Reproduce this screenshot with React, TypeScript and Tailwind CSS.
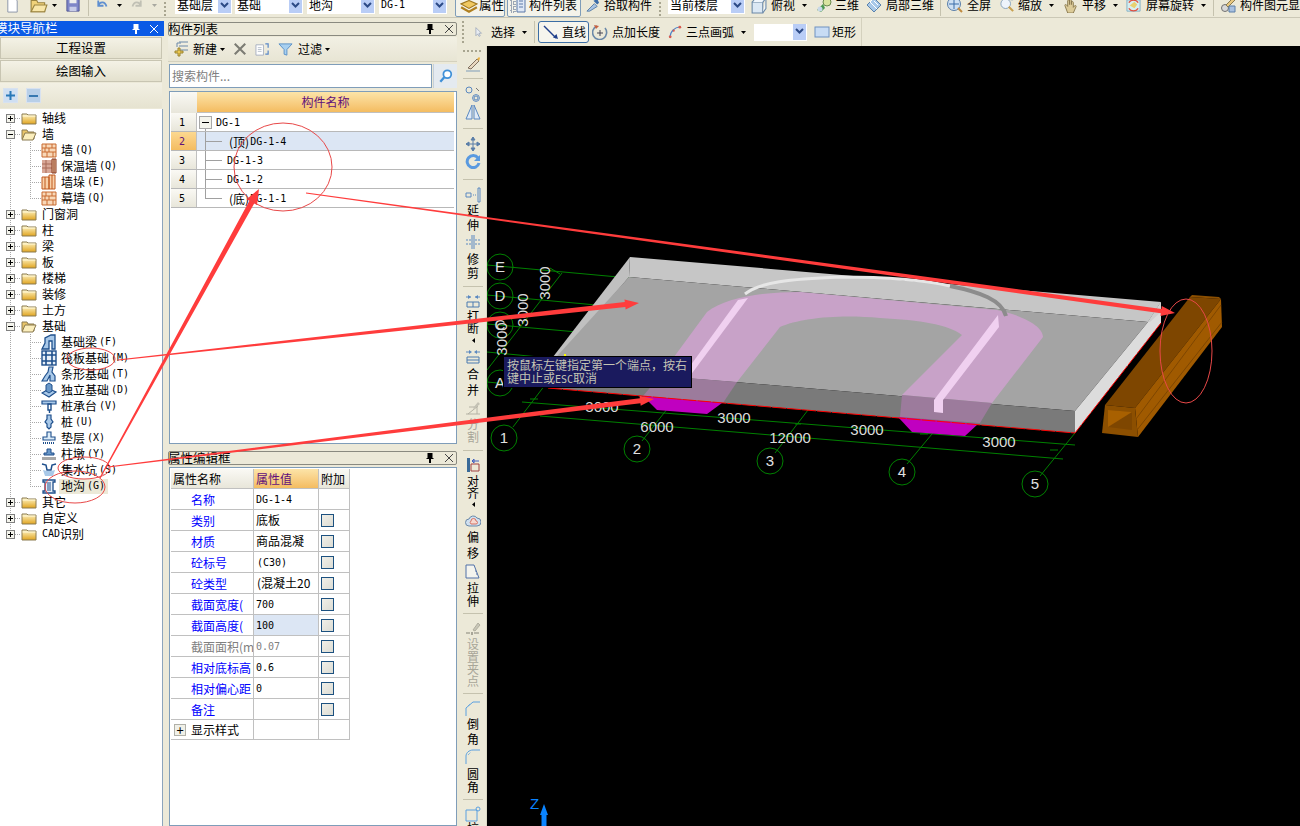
import React from "react";

const mono = "font-['DejaVu_Sans_Mono','Noto_Sans_CJK_SC',monospace] text-[10px]";

const Caret = ({ gray = false }: { gray?: boolean }) => (
  <svg width="5" height="3" viewBox="0 0 5 3" className="shrink-0"><path d="M0 0h5L2.5 3z" fill={gray ? "#a8a8a0" : "#000"} /></svg>
);
const Sep = () => <div className="w-px h-[22px] bg-[#c5c2ae] shrink-0" />;
const Grip = () => (
  <div className="w-[2px] h-[22px] shrink-0 bg-[repeating-linear-gradient(to_bottom,#a8a590_0,#a8a590_2px,transparent_2px,transparent_4px)]" />
);

const I = ({ children, s = 16, cls = "" }: { children: React.ReactNode; s?: number; cls?: string }) => (
  <svg width={s} height={s} viewBox="0 0 16 16" fill="none" className={"shrink-0 " + cls}>{children}</svg>
);

const Chevron = () => (
  <div className="w-[13px] h-[16px] bg-[#b9cdf6] flex items-center justify-center shrink-0">
    <svg width="9" height="7" viewBox="0 0 9 7"><path d="M1 1l3.5 3.5L8 1" stroke="#2c4a86" strokeWidth="2" fill="none" /></svg>
  </div>
);
const Sel = ({ w, t, m = false }: { w: string; t: string; m?: boolean }) => (
  <div className={"h-[18px] bg-white flex items-center justify-between shrink-0 pr-px " + w}>
    <span className={m ? mono + " pl-[2px] leading-none" : "pl-[2px] leading-none"}>{t}</span>
    <Chevron />
  </div>
);

/* toolbar icons */
const IDoc = () => <I s={15}><path d="M3 0h7l3 3v12H3z" fill="#fff" stroke="#8a93a8" /></I>;
const IOpen = () => <I s={18}><path d="M1 4h5l1 2h6v8H1z" fill="#f0d27a" stroke="#9a8440" /><path d="M4 8h11l-2 6H1z" fill="#f8e6a8" stroke="#9a8440" /></I>;
const ISave = () => <I s={14}><path d="M1 1h14v14H1z" fill="#7f86c8" stroke="#4a5090" /><path d="M4 1h8v5H4z" fill="#eee" /><path d="M4 10h8v5H4z" fill="#c8cce8" /></I>;
const IUndo = () => <I s={12}><path d="M3 2v7h7M3 9c2-6 9-6 11 1" stroke="#5f8fd0" strokeWidth="2.4" /></I>;
const IRedo = () => <I s={12}><path d="M13 2v7H6M13 9c-2-6-9-6-11 1" stroke="#c0c0b4" strokeWidth="2.4" /></I>;
const IProp = () => <I s={18}><path d="M1 7l7-3 7 3-7 4z" fill="#f0c860" stroke="#a07820" /><path d="M1 10l7 4 7-4" stroke="#b08020" strokeWidth="2" /></I>;
const IList = () => <I s={16}><path d="M1 2h4v3H1zM1 7h4v3H1zM1 12h4v3H1z" stroke="#455a80" strokeDasharray="1 1" /><path d="M7 1h8v14H7z" fill="#dfe8f6" stroke="#5a78a8" /><path d="M9 4h4M9 7h4M9 10h4" stroke="#5a78a8" /></I>;
const IPick = () => <I s={15}><path d="M2 14l8-8 3 3-8 5z" fill="#a8c4e4" stroke="#5a7ea8" /><path d="M9 3l4 4 2-2-2-4z" fill="#3b6ca8" /></I>;
const IView = () => <I s={17}><path d="M2 5h10v10H2z" fill="#dbe8f4" stroke="#6a88a8" /><path d="M2 5l3-4h10l-3 4M12 15l3-4V1" fill="#f0f6fc" stroke="#6a88a8" /></I>;
const I3D = () => <I><circle cx="11" cy="5" r="4" fill="#d8e4a0" stroke="#6a8a50" /><path d="M1 13l6-6 2 4-4 4z" fill="#4a9a50" /><circle cx="4" cy="12" r="2.5" fill="#c8d8e8" /></I>;
const ILocal = () => <I><path d="M1 8l7-7 7 7-7 7z" fill="#a8c8e8" stroke="#5a82ac" /><path d="M4 5l7 7M8 1l-4 4M8 4l4 4" stroke="#fff" /></I>;
const IFull = () => <I><circle cx="7" cy="7" r="6.5" fill="#cfe0f2" stroke="#5a7ea8" /><path d="M7 2v10M2 7h10" stroke="#3b6ca8" /><path d="M11 11l4 4" stroke="#c08a40" strokeWidth="2" /></I>;
const IZoom = () => <I s={14}><circle cx="6.5" cy="6.5" r="5.5" fill="#eef4fb" stroke="#7f9db9" /><path d="M10 10l5 5" stroke="#c8a050" strokeWidth="2.4" /><path d="M12 2h3" stroke="#5a7ea8" /></I>;
const IPan = () => <I s={15}><path d="M2 8c0-2 2-1 3 1V3c1-2 2-1 2 0v4-5c1-1 2 0 2 1v4-3c1-1 2 0 2 1v5c2-3 3-2 3-1l-3 7H5z" fill="#dccb98" stroke="#8a7a50" /></I>;
const IRot = () => <I s={15}><path d="M1 2h14v12H1z" fill="#d8eef0" stroke="#7fb0c8" /><path d="M4 8l5-4 3 3-3 4z" fill="#e8d070" /><path d="M3 11a6 6 0 0 0 10 0M13 5a6 6 0 0 0-10 0" stroke="#e05040" strokeWidth="1.4" /></I>;
const IShow = () => <I><circle cx="5" cy="11" r="3.5" fill="#d8d8d8" stroke="#707070" /><path d="M6 8l7-7 2 2-7 7z" fill="#e8c880" stroke="#8a7a50" /><path d="M9 9h6v6H9z" fill="#a8c0e0" stroke="#5a7ea8" /></I>;
const IPointer = () => <I s={10}><path d="M3 1v13l3-3 2 4 2-1-2-4h4z" fill="#e8ecf2" stroke="#8a98b0" /></I>;
const ILine = () => <I><path d="M1 2l12 12" stroke="#1f3f8a" strokeWidth="1.4" /><path d="M15 15l-5-1.5 3.5-3.5z" fill="#1f3f8a" /></I>;
const ICircle = () => <I><path d="M5 2a7 7 0 1 0 8 2" stroke="#6a88a8" strokeWidth="1.6" /><path d="M2 1l5 1-3 3z" fill="#c86040" /><path d="M8 6v6M5 9h6" stroke="#445" /></I>;
const IArc = () => <I s={14}><path d="M2 14C3 7 7 3 14 2" stroke="#4a82c8" strokeWidth="1.4" /><circle cx="2.5" cy="13.5" r="1.6" fill="#d85a50" /><circle cx="13.5" cy="2.5" r="1.6" fill="#d85a50" /><circle cx="6.5" cy="6.5" r="1.3" fill="#d85a50" /></I>;
const IRect = () => <I><rect x="1" y="3" width="14" height="10" fill="#c8dcf4" stroke="#6f92c0" /></I>;
const INew = () => <I><path d="M6 1h9M6 5h9M6 9h9" stroke="#6a88a8" /><path d="M8 2H4v4" stroke="#6a88a8" /><path d="M2 10h3V7h2v3h3v2H7v3H5v-3H2z" fill="#ecc850" stroke="#9a8430" /></I>;
const IX = () => <I s={14}><path d="M2 2l12 12M14 2L2 14" stroke="#7c7c74" strokeWidth="2.4" /></I>;
const ICopy = () => <I s={15}><path d="M1 3h8v11H1z" fill="#fff" stroke="#a8b0c0" /><path d="M3 6h4M3 8h4M3 10h4" stroke="#b8c0cc" /><path d="M11 2h3v4M14 9v4h-3" stroke="#5a88c8" strokeWidth="1.3" /></I>;
const IFilter = () => <I s={15}><path d="M1 2h14L9.5 8v6l-3-1V8z" fill="#a8d0f0" stroke="#5a90c8" /></I>;
const ISearch = () => <I s={14}><circle cx="9.5" cy="6" r="4.5" fill="#fff" stroke="#3f90d8" strokeWidth="2" /><path d="M6 9.5l-4.5 5" stroke="#3f90d8" strokeWidth="2.6" /></I>;

/* vertical toolbar */
const G = "#5a88c0";
const VI: Record<string, React.ReactNode> = {
  brush: <I><path d="M1 15h14" stroke="#7f9db9" /><path d="M3 12l9-9 2 2-8 8z" fill="#e8d8c0" stroke="#807060" /><path d="M12 3l2-2 1 1-1 3z" fill="#e8b040" /></I>,
  scale: <I><circle cx="4" cy="4" r="3" stroke={G} /><circle cx="11" cy="12" r="3.4" stroke={G} /><circle cx="11" cy="12" r="2" stroke={G} /><path d="M11 2l3 3" stroke="#777" /></I>,
  mirror: <I><path d="M7 1L1 15h6zM9 1l6 14H9z" fill="#dfeaf6" stroke={G} /></I>,
  move: <I><path d="M8 1v14M1 8h14M8 1L6 4h4zM8 15l-2-3h4zM1 8l3-2v4zM15 8l-3-2v4z" stroke="#5a7ea8" fill="#5a7ea8" /></I>,
  rot: <I><path d="M13 4a6 6 0 1 0 1 5" stroke="#5a9ae0" strokeWidth="3" /><path d="M15 1v6H9z" fill="#5a9ae0" /></I>,
  ext: <I><path d="M1 6h5v4H1z" stroke={G} /><path d="M8 8h4" stroke={G} strokeDasharray="1 1" /><path d="M13 1h2v14h-2z" stroke={G} /></I>,
  trim: <I><path d="M1 6h6M1 10h6M10 6h5M10 10h5" stroke={G} strokeDasharray="2 1" /><path d="M7 1v14M9 1v14" stroke={G} /></I>,
  brk: <I><path d="M1 4h5M10 4h5" stroke={G} /><path d="M6 4L3 2v4zM10 4l3-2v4z" fill={G} /><path d="M2 9h12v5H2zM8 9v5" stroke="#4a7ab0" /></I>,
  mrg: <I><path d="M1 3h4M11 3h4" stroke={G} /><path d="M7 3L4 1v4zM9 3l3-2v4z" fill={G} /><path d="M2 8h12v6H2zM2 11h12" stroke="#4a7ab0" /></I>,
  split: <I><path d="M1 14h14M3 14L13 6M4 7h8v7" stroke="#b4b2a4" /><path d="M8 8l5-6 2 2-6 5z" fill="#c4c2b4" /></I>,
  align: <I><path d="M2 1h3v14H2z" fill="#3a6a98" /><path d="M6 7h8v7H6z" stroke="#a04040" /><path d="M7 4h7M7 4l2-2v4z" stroke="#4060c0" /></I>,
  off: <I><path d="M4 13a3.5 3.5 0 0 1 0-7 4.5 4.5 0 0 1 8-1 4 4 0 0 1 0 8z" fill="#cfe0f0" stroke="#6a88a8" /><path d="M6 11a2 2 0 0 1 0-3 2.5 2.5 0 0 1 5 0 1.5 1.5 0 0 1 0 3z" fill="#f6d8d0" stroke="#d87060" /></I>,
  str: <I><path d="M1 14V1h8l5 13z" stroke="#5070a8" fill="#f4f4ee" /><path d="M10 7h1M11 10h2" stroke="#5070a8" strokeDasharray="1 1" /></I>,
  grip: <I><path d="M1 12h4M9 12h5" stroke="#a8a698" strokeWidth="1.3" /><rect x="6" y="11" width="2" height="3" fill="#a8a698" /><path d="M8 9l5-7 2 2-5 6z" fill="#c8c6b8" stroke="#b0ae9e" /></I>,
  cham: <I><path d="M1 15V7l7-6h7" stroke="#5aa0e0" /><path d="M3 5l2-2" stroke="#5aa0e0" strokeDasharray="1 1" /></I>,
  fil: <I><path d="M1 15V7C1 4 4 1 8 1h7" stroke="#5aa0e0" /><path d="M3 6l3-3" stroke="#5aa0e0" strokeDasharray="1 1" /></I>,
  rc: <I><path d="M1 4h11v11H1z" stroke="#5aa0e0" /><circle cx="13" cy="3" r="2" stroke="#5aa0e0" /></I>,
};

type VItem = { y: number; k: "grip" | "sep" | "icon" | "ch" | "tri"; v?: string; off?: boolean };
const vRaw: VItem[] = [
  { y: 50, k: "grip" }, { y: 63, k: "icon", v: "brush" }, { y: 79, k: "sep" },
  { y: 92, k: "icon", v: "scale" }, { y: 114, k: "icon", v: "mirror" }, { y: 129, k: "sep" },
  { y: 142, k: "icon", v: "move" }, { y: 164, k: "icon", v: "rot" }, { y: 179, k: "sep" },
  { y: 194, k: "icon", v: "ext" }, { y: 211, k: "ch", v: "延" }, { y: 222, k: "ch", v: "伸" },
  { y: 243, k: "icon", v: "trim" }, { y: 261, k: "ch", v: "修" }, { y: 272, k: "ch", v: "剪" }, { y: 286, k: "sep" },
  { y: 300, k: "icon", v: "brk" }, { y: 317, k: "ch", v: "打" }, { y: 328, k: "ch", v: "断" }, { y: 338, k: "tri" },
  { y: 357, k: "icon", v: "mrg" }, { y: 375, k: "ch", v: "合" }, { y: 387, k: "ch", v: "并" },
  { y: 410, k: "icon", v: "split" }, { y: 424, k: "ch", v: "分", off: true }, { y: 437, k: "ch", v: "割", off: true }, { y: 449, k: "sep" },
  { y: 465, k: "icon", v: "align" }, { y: 482, k: "ch", v: "对" }, { y: 493, k: "ch", v: "齐" }, { y: 502, k: "tri" },
  { y: 522, k: "icon", v: "off" }, { y: 538, k: "ch", v: "偏" }, { y: 551, k: "ch", v: "移" },
  { y: 573, k: "icon", v: "str" }, { y: 589, k: "ch", v: "拉" }, { y: 601, k: "ch", v: "伸" }, { y: 613, k: "sep" },
  { y: 628, k: "icon", v: "grip" }, { y: 645, k: "ch", v: "设", off: true }, { y: 657, k: "ch", v: "置", off: true }, { y: 669, k: "ch", v: "夹", off: true }, { y: 681, k: "ch", v: "点", off: true }, { y: 693, k: "sep" },
  { y: 708, k: "icon", v: "cham" }, { y: 725, k: "ch", v: "倒" }, { y: 737, k: "ch", v: "角" },
  { y: 758, k: "icon", v: "fil" }, { y: 775, k: "ch", v: "圆" }, { y: 787, k: "ch", v: "角" }, { y: 799, k: "sep" },
  { y: 814, k: "icon", v: "rc" }, { y: 829, k: "ch", v: "拉" },
];

const VBar = () => (
  <div className="w-[27px] h-full bg-[#ece9d8] overflow-hidden flex flex-col items-center shrink-0 border-r border-[#dcd9c6]">
    {vRaw.map((it, i) => {
      const top = i === 0 ? 46 : (vRaw[i - 1].y + it.y) / 2;
      const bot = i === vRaw.length - 1 ? it.y + 6 : (it.y + vRaw[i + 1].y) / 2;
      return (
        <div key={i} style={{ height: bot - top }} className="w-full flex items-center justify-center shrink-0 leading-none">
          {it.k === "grip" && <div className="w-[20px] h-[2px] bg-[repeating-linear-gradient(to_right,#a8a590_0,#a8a590_2px,transparent_2px,transparent_4px)]" />}
          {it.k === "sep" && <div className="w-[20px] h-px bg-[#c5c2ae]" />}
          {it.k === "icon" && VI[it.v!]}
          {it.k === "ch" && <span className={"leading-[10px] " + (it.off ? "text-[#a8a698]" : "text-black")}>{it.v}</span>}
          {it.k === "tri" && <svg width="3" height="5" viewBox="0 0 3 5"><path d="M3 0v5L0 2.500z" fill="#000" /></svg>}
        </div>
      );
    })}
  </div>
);

/* tree icons */
const Folder = ({ open }: { open?: boolean }) => (
  <svg width="16" height="14" viewBox="0 0 16 14" className="shrink-0">
    <defs><linearGradient id="fg" x1="0" y1="0" x2="0" y2="1"><stop offset="0" stopColor="#fff6c8" /><stop offset="1" stopColor="#e0a420" /></linearGradient></defs>
    {open ? (
      <>
        <path d="M1 3h5l1 2h6v7H1z" fill="#e8c468" stroke="#8a7a50" />
        <path d="M4 6h11l-3 7H1z" fill="#fbeebc" stroke="#8a7a50" />
      </>
    ) : (
      <>
        <path d="M1 3h5l1 1h8v9H1z" fill="url(#fg)" stroke="#8a7a50" />
        <path d="M1.500 5h13" stroke="#fff8d8" />
      </>
    )}
  </svg>
);
const B = "#1e4f8c";
const TI: Record<string, React.ReactNode> = {
  wall: <I><path d="M1 2h14v13H1z" fill="#f8d8b8" stroke="#c86a30" /><path d="M1 6h14M1 10h14M5 2v4M11 2v4M8 6v4M4 6v4M12 10v5M6 10v5" stroke="#c86a30" /></I>,
  ins: <I><path d="M1 2h10v13H1z" fill="#d8a898" /><path d="M1 6h10M1 10h10M5 2v13" stroke="#a86a58" /><path d="M11 1h4v14h-4zM13 1v14" stroke="#8a3a20" fill="#e8c0a0" /></I>,
  col: <I><path d="M1 3h7v12H1zM8 1h6v14H8z" fill="#f8d0a8" stroke="#c05a20" /><path d="M4 3v12M11 1v14" stroke="#c05a20" /></I>,
  beam: <I><path d="M1 15l3-6V4l6-3h4v14h-3V7H8v8z" fill="#a8c8e8" stroke={B} strokeWidth="1.3" /></I>,
  raft: <I><rect x="1" y="1" width="14" height="14" fill="#e8f0f8" stroke={B} strokeWidth="1.4" /><path d="M1 5h14M1 11h14M5 1v14M11 1v14" stroke={B} strokeWidth="1.6" /></I>,
  strip: <I><path d="M1 15l3-5 3-4 1-5h4l-1 5 3 4v5H9V9L6 15z" fill="#a8c8e8" stroke={B} strokeWidth="1.2" /></I>,
  ind: <I><path d="M1 11l7-4 7 3-7 5z" fill="#a8c8e8" stroke={B} strokeWidth="1.2" /><path d="M5 3l3-2 3 2v6l-3 2-3-2z" fill="#6a98c8" stroke={B} /></I>,
  cap: <I><path d="M1 3h14v3H1z" fill="#a8c8e8" stroke={B} strokeWidth="1.2" /><path d="M7 6h3v6H7zM8.500 12v3" stroke={B} strokeWidth="1.4" /></I>,
  pile: <I><path d="M6 1h4v4l2 3-2 2v3l-2 2-2-2v-3L4 8l2-3z" fill="#a8c8e8" stroke={B} strokeWidth="1.2" /></I>,
  cush: <I><path d="M6 2h4v5h4v3H2V7h4z" fill="#dcecf8" stroke={B} strokeWidth="1.1" /><path d="M2 13h12" stroke={B} strokeDasharray="1 1" strokeWidth="2" /></I>,
  pier: <I><path d="M6 3h4v4h3v2H3V7h3z" fill="#6a98c8" stroke={B} /><path d="M1 11h14v3H1z" fill="#a8a8a8" /></I>,
  pit: <I><path d="M1 2l4 1 1 5h4l1-5 4-1" stroke={B} strokeWidth="1.5" fill="none" /><path d="M2 8l4 1h4l4-1-2 6H4z" fill="#a8c8e8" /></I>,
  ditch: <I><path d="M2 2h12v2h-2v9h2v2H2v-2h2V4H2z" fill="#e8f0f8" stroke={B} strokeWidth="1.3" /><path d="M7 4v9M9 4v9" stroke={B} /></I>,
};

type TR = { t: string; c?: string; icon?: string; open?: boolean; child?: boolean; last?: boolean; pre?: boolean; end?: boolean; sel?: boolean };
const tree: TR[] = [
  { t: "轴线" },
  { t: "墙", open: true },
  { t: "墙", c: "(Q)", icon: "wall", child: true },
  { t: "保温墙", c: "(Q)", icon: "ins", child: true },
  { t: "墙垛", c: "(E)", icon: "col", child: true },
  { t: "幕墙", c: "(Q)", icon: "wall", child: true, last: true },
  { t: "门窗洞" }, { t: "柱" }, { t: "梁" }, { t: "板" }, { t: "楼梯" }, { t: "装修" }, { t: "土方" },
  { t: "基础", open: true },
  { t: "基础梁", c: "(F)", icon: "beam", child: true },
  { t: "筏板基础", c: "(M)", icon: "raft", child: true },
  { t: "条形基础", c: "(T)", icon: "strip", child: true },
  { t: "独立基础", c: "(D)", icon: "ind", child: true },
  { t: "桩承台", c: "(V)", icon: "cap", child: true },
  { t: "桩", c: "(U)", icon: "pile", child: true },
  { t: "垫层", c: "(X)", icon: "cush", child: true },
  { t: "柱墩", c: "(Y)", icon: "pier", child: true },
  { t: "集水坑", c: "(S)", icon: "pit", child: true },
  { t: "地沟", c: "(G)", icon: "ditch", child: true, last: true, sel: true },
  { t: "其它" }, { t: "自定义" },
  { t: "", c: "CAD", pre: true, end: true },
];

const dots = { stroke: "#a8a8a8", strokeDasharray: "1 1" };

const TreeRow = ({ r, first }: { r: TR; first: boolean }) => (
  <div className="h-4 flex items-center">
    <svg width={r.child ? 41 : 21} height="16" className="shrink-0">
      <path d={`M10.500 ${first ? 8 : 0}V${r.end ? 8 : 16}`} {...dots} />
      {r.child ? (
        <>
          <path d={`M30.500 0V${r.last ? 8 : 16}M30 8.500H41`} {...dots} />
        </>
      ) : (
        <>
          <path d="M15 8.500H21" {...dots} />
          <rect x="6.500" y="4.500" width="8" height="8" fill="#f4f4ec" stroke="#808080" />
          <path d="M8 8.500h5" stroke="#000" />
          {!r.open && <path d="M10.500 6v5" stroke="#000" />}
        </>
      )}
    </svg>
    {r.child ? TI[r.icon!] : <Folder open={r.open} />}
    <div className={"flex items-center h-[15px] leading-none whitespace-nowrap " + (r.sel ? "bg-[#ece9d8] ml-[2px] pl-[2px] pr-[3px]" : r.child ? "ml-[4px]" : "ml-[5px]")}>
      {r.pre ? (
        <>
          <span className={mono}>CAD</span>
          <span>识别</span>
        </>
      ) : (
        <>
          <span>{r.t}</span>
          {r.c && <span className={mono + " ml-[2px]"}>{r.c}</span>}
        </>
      )}
    </div>
  </div>
);

const PinIcon = ({ c }: { c: string }) => (
  <svg width="8" height="10" viewBox="0 0 8 10"><path d="M1.500 0h5v5h1v1H5v4H3V6H.500V5h1z" fill={c} /></svg>
);
const CloseIcon = ({ c }: { c: string }) => (
  <svg width="8" height="8" viewBox="0 0 8 8"><path d="M0 0l8 8M8 0L0 8" stroke={c} /></svg>
);
const PanelHead = ({ t }: { t: string }) => (
  <div className="h-[14px] border border-[#8a8a80] rounded-[2px] bg-[#ece9d8] flex items-center justify-between leading-none text-[12.500px] overflow-hidden shrink-0">
    <span className="-ml-px">{t}</span>
    <div className="flex items-center gap-[11px] pr-[3px]">
      <PinIcon c="#000" />
      <CloseIcon c="#444" />
    </div>
  </div>
);

const Btn = ({ t }: { t: string }) => (
  <div className="h-[22px] w-[162px] bg-gradient-to-b from-[#f4f2e6] to-[#e4e1ce] border border-[#c8c5b2] flex items-center justify-center leading-none text-[12.500px] shrink-0">{t}</div>
);

const compRows = [
  { n: 1, t: "DG-1" }, { n: 2, pre: "(顶)", t: "DG-1-4" }, { n: 3, t: "DG-1-3" }, { n: 4, t: "DG-1-2" }, { n: 5, pre: "(底)", t: "DG-1-1" },
];

const props: { n: string; v?: string; m?: boolean; chk?: boolean; sel?: boolean; g?: boolean; pl?: string }[] = [
  { n: "名称", v: "DG-1-4", m: true },
  { n: "类别", v: "底板", chk: true },
  { n: "材质", v: "商品混凝", chk: true },
  { n: "砼标号", v: "(C30)", m: true, chk: true, pl: "pl-[3px]" },
  { n: "砼类型", v: "(混凝土20", chk: true, pl: "pl-[3px]" },
  { n: "截面宽度(", v: "700", m: true, chk: true },
  { n: "截面高度(", v: "100", m: true, chk: true, sel: true },
  { n: "截面面积(m", v: "0.07", m: true, chk: true, g: true },
  { n: "相对底标高", v: "0.6", m: true, chk: true },
  { n: "相对偏心距", v: "0", m: true, chk: true },
  { n: "备注", chk: true },
];
const Check = () => <div className="w-[13px] h-[13px] border border-[#1c5180] bg-gradient-to-br from-[#f0efe8] to-[#dcdcd4]" />;

const arrow = (x1: number, y1: number, x2: number, y2: number, w0: number, w1: number, hw: number, hl: number) => {
  const d = Math.hypot(x2 - x1, y2 - y1);
  const ux = (x2 - x1) / d, uy = (y2 - y1) / d, nx = -uy, ny = ux;
  const bx = x2 - ux * hl, by = y2 - uy * hl;
  const p = (x: number, y: number, k: number) => `${(x + nx * k).toFixed(1)},${(y + ny * k).toFixed(1)}`;
  return [p(x1, y1, w0 / 2), p(bx, by, w1 / 2), p(bx, by, hw / 2), p(x2, y2, 0), p(bx, by, -hw / 2), p(bx, by, -w1 / 2), p(x1, y1, -w0 / 2)].join(" ");
};

const Num = ({ x, y, t }: { x: number; y: number; t: string }) => (
  <text x={x} y={y + 5} textAnchor="middle" fontSize="15" fill="#dcdcdc" fontFamily="Liberation Sans, sans-serif">{t}</text>
);
const VNum = ({ x, y, t }: { x: number; y: number; t: string }) => (
  <text transform={`translate(${x + 5} ${y}) rotate(-90)`} textAnchor="middle" fontSize="15" fill="#dcdcdc" fontFamily="Liberation Sans, sans-serif">{t}</text>
);
const Axis = ({ x, y, t }: { x: number; y: number; t: string }) => (
  <g>
    <circle cx={x} cy={y} r="13" fill="none" stroke="#008000" />
    <text x={x} y={y + 5} textAnchor="middle" fontSize="15" fill="#e0e0e0" fontFamily="Liberation Sans, sans-serif">{t}</text>
  </g>
);

const Scene = () => (
  <svg viewBox="487 46 813 780" className="block w-full h-full">
    <g stroke="#008000" fill="none">
      <path d="M487 265L640 279M487 295L640 309M487 324L600 334M487 352L560 359M487 382L540 387" />
      <path d="M522 402L1075 445M540 416L1063 459" />
      <path d="M513 427L545 385M562 273L487 370M642 441L675 399M775 453L808 410M907 464L942 422M1040 476L1075 433" />
      <path d="M550 268l10 6M530 399h8M795 424h6M920 434h8M1050 450h8" />
    </g>
    <polygon points="630,257 629,277 553,366 546,366" fill="#c0c0c0" />
    <polygon points="630,257 1161,302 1148,322 629,277" fill="#c6c6c6" />
    <polygon points="629,277 1148,322 1075,411 548,366" fill="#a4a4a4" />
    <polygon points="548,366 1075,411 1075,433 548,388" fill="#7a7a7a" />
    <polygon points="1161,302 1161,323 1075,433 1075,411 1148,322" fill="#dcdcdc" />
    <polygon points="1161,302 1161,312 1150,322 1148,322" fill="#cfcfcf" />

    <path d="M660 376L707 312C725 298 760 292 800 292L997 310C1020 315 1043 325 1043 337L992 403L902 395L962 335C950 325 920 320 880 318C840 314 800 318 780 327L737 382z" fill="#c8a2c8" />
    <polygon points="660,376 737,382 723,403 643,396" fill="#9c7b9c" />
    <polygon points="902,395 992,403 980,423 900,417" fill="#9c7b9c" />
    <polygon points="643,396 722,403 707,414 657,410" fill="#c000c0" />
    <polygon points="898,417 978,424 965,436 912,432" fill="#c000c0" />

    <polygon points="738,300 748,298 687,380 678,388 677,384" fill="#f0d0f0" />
    <polygon points="998,315 999,327 943,400 943,413 934,412 934,400" fill="#f0d0f0" />
    <path d="M745 294C760 282 790 279 840 277C880 277 920 279 950 286" stroke="#e6e6e6" strokeWidth="3" fill="none" />
    <path d="M950 286C980 292 1002 300 1006 316" stroke="#8c8c8c" strokeWidth="4" fill="none" />
    <path d="M548 388L1075 433L1161 323" stroke="#ff0000" fill="none" strokeDasharray="14 1" />

    <polygon points="1105,405 1135,408 1221,299 1190,297" fill="#7e4600" />
    <polygon points="1135,408 1221,299 1222,327 1138,437" fill="#a05a00" />
    <path d="M1136 419L1221 305M1137 430L1222 322" stroke="#7e4600" fill="none" />
    <polygon points="1190,297 1192,295 1219,297 1221,299" fill="#8c4f00" />
    <polygon points="1105,405 1135,408 1138,437 1102,433" fill="#8c4f00" />
    <polygon points="1108,410 1132,412 1132,430 1108,427" fill="#7e4600" />
    <polygon points="1108,410 1132,412 1108,427" fill="#a86000" />

    <rect x="564" y="354" width="2" height="3" fill="#ffff00" />

    <Axis x={500} y={267} t="E" />
    <Axis x={500} y={296} t="D" />
    <Axis x={500} y={325} t="C" />
    <Axis x={500} y={383} t="A" />
    <Axis x={504} y={438} t="1" />
    <Axis x={637} y={449} t="2" />
    <Axis x={770} y={461} t="3" />
    <Axis x={902} y={472} t="4" />
    <Axis x={1035} y={484} t="5" />
    <VNum x={545} y={283} t="3000" />
    <VNum x={523} y={310} t="3000" />
    <VNum x={502} y={339} t="3000" />
    <Num x={602} y={407} t="3000" />
    <Num x={657} y={427} t="6000" />
    <Num x={734} y={418} t="3000" />
    <Num x={790} y={438} t="12000" />
    <Num x={867} y={430} t="3000" />
    <Num x={999} y={442} t="3000" />

    <text x="530" y="809" fontSize="15" fill="#0a84ff" fontFamily="Liberation Sans, sans-serif">Z</text>
    <path d="M544 804l4 11h-1.500V826h-5V815H540z" fill="#0a84ff" />
  </svg>
);

export default function App() {
  return (
    <div className="relative w-[1300px] h-[826px] overflow-hidden bg-[#ece9d8] text-black text-[12px] font-['Noto_Sans_CJK_SC','Liberation_Sans',sans-serif] flex flex-col">
      {/* top toolbar */}
      <div className="h-[18px] shrink-0 overflow-hidden border-b border-[#cbc8b6]">
        <div className="h-[24px] -mt-[7px] flex items-center leading-none whitespace-nowrap">
          <div className="ml-[5px]"><IDoc /></div>
          <div className="ml-[10px]"><IOpen /></div>
          <div className="ml-[4px]"><Caret /></div>
          <div className="ml-[9px]"><ISave /></div>
          <div className="ml-[8px]"><Sep /></div>
          <div className="ml-[7px]"><IUndo /></div>
          <div className="ml-[9px]"><Caret /></div>
          <div className="ml-[9px]"><IRedo /></div>
          <div className="ml-[9px]"><Caret gray /></div>
          <div className="ml-[7px]"><Grip /></div>
          <div className="ml-[9px]"><Sel w="w-[57px]" t="基础层" /></div>
          <div className="ml-[3px]"><Sel w="w-[68px]" t="基础" /></div>
          <div className="ml-[4px]"><Sel w="w-[68px]" t="地沟" /></div>
          <div className="ml-[4px]"><Sel w="w-[68px]" t="DG-1" m /></div>
          <div className="ml-[8px] w-[50px] h-[24px] border border-[#7f9db9] rounded-[2px] bg-[#f4f3ea] flex items-center pl-[4px] gap-[1px]"><IProp /><span className="text-[12.500px]">属性</span></div>
          <div className="ml-[2px] w-[74px] h-[24px] border border-[#7f9db9] rounded-[2px] bg-[#f4f3ea] flex items-center pl-[2px] gap-[3px]"><IList /><span>构件列表</span></div>
          <div className="ml-[4px]"><IPick /></div>
          <span className="ml-[4px]">拾取构件</span>
          <div className="ml-[7px]"><Grip /></div>
          <div className="ml-[7px]"><Sel w="w-[77px]" t="当前楼层" /></div>
          <div className="ml-[5px]"><IView /></div>
          <span className="ml-[4px]">俯视</span>
          <div className="ml-[7px]"><Caret /></div>
          <div className="ml-[9px]"><I3D /></div>
          <span className="ml-[3px]">三维</span>
          <div className="ml-[7px]"><ILocal /></div>
          <span className="ml-[4px]">局部三维</span>
          <div className="ml-[6px]"><Sep /></div>
          <div className="ml-[6px]"><IFull /></div>
          <span className="ml-[4px]">全屏</span>
          <div className="ml-[9px]"><IZoom /></div>
          <span className="ml-[4px]">缩放</span>
          <div className="ml-[7px]"><Caret /></div>
          <div className="ml-[9px]"><IPan /></div>
          <span className="ml-[4px]">平移</span>
          <div className="ml-[7px]"><Caret /></div>
          <div className="ml-[8px]"><IRot /></div>
          <span className="ml-[5px]">屏幕旋转</span>
          <div className="ml-[7px]"><Caret /></div>
          <div className="ml-[7px]"><Sep /></div>
          <div className="ml-[6px]"><IShow /></div>
          <span className="ml-[4px]">构件图元显</span>
        </div>
      </div>

      <div className="flex-1 flex min-h-0">
        {/* left nav */}
        <div className="w-[165px] shrink-0 pt-[3px] flex flex-col">
          <div className="w-[164px] h-[15px] bg-[#0a5ae6] text-white flex items-center justify-between leading-none text-[13px] overflow-hidden shrink-0">
            <span className="-ml-[5px] text-[12.500px]">模块导航栏</span>
            <div className="flex items-center gap-[10px] pr-[6px]">
              <PinIcon c="#fff" />
              <CloseIcon c="#fff" />
            </div>
          </div>
          <div className="h-px shrink-0" />
          <Btn t="工程设置" />
          <div className="h-px shrink-0" />
          <Btn t="绘图输入" />
          <div className="h-[25px] w-[162px] mt-px flex items-center pl-[3px] gap-[8px] bg-gradient-to-b from-[#f2f0e4] to-[#e6e3d0] shrink-0">
            <div className="w-[15px] h-[15px] bg-[#cfdff2] border border-[#d8e2f0] flex items-center justify-center"><svg width="9" height="9" viewBox="0 0 9 9"><path d="M4.500 0v9M0 4.500h9" stroke="#2878b8" strokeWidth="2" /></svg></div>
            <div className="w-[15px] h-[15px] bg-[#b8cfe8] border border-[#d8e2f0] flex items-center justify-center"><div className="w-[9px] h-[2px] bg-[#3878b0]" /></div>
          </div>
          <div className="w-[163px] mt-[1px] flex-1 bg-white border-r border-[#8ca4bc] pt-px overflow-hidden">
            {tree.map((r, i) => <TreeRow key={i} r={r} first={i === 0} />)}
          </div>
        </div>

        {/* middle */}
        <div className="ml-[3px] w-[289px] shrink-0 pt-[4px] flex flex-col">
          <PanelHead t="构件列表" />
          <div className="h-[25px] mt-[1px] flex items-center pl-[5px] leading-none border-b border-[#d4d1be] bg-gradient-to-b from-[#f2f0e4] to-[#e8e5d4] shrink-0">
            <INew />
            <span className="ml-[4px]">新建</span>
            <div className="ml-[3px]"><Caret /></div>
            <div className="ml-[8px]"><IX /></div>
            <div className="ml-[8px]"><ICopy /></div>
            <div className="ml-[8px]"><IFilter /></div>
            <span className="ml-[5px]">过滤</span>
            <div className="ml-[3px]"><Caret /></div>
          </div>
          <div className="h-[24px] mt-[2px] ml-[1px] flex items-center shrink-0">
            <div className="w-[263px] h-[24px] bg-white border border-[#7f9db9] text-[#808080] flex items-center pl-[2px] leading-none">搜索构件...</div>
            <div className="w-[24px] h-[24px] ml-[1px] bg-[#e4eaf0] flex items-center justify-center border-l border-[#c4d0dc]"><ISearch /></div>
          </div>
          <div className="h-[353px] mt-[3px] ml-[1px] bg-white border border-[#7f9db9] pl-px pt-0 overflow-hidden shrink-0">
            <div className="w-[283px]">
              <div className="h-[21px] flex">
                <div className="w-[26px] bg-gradient-to-b from-[#faf9f4] to-[#e8e6da]" />
                <div className="flex-1 bg-gradient-to-b from-[#fce4a8] to-[#f4bc60] text-[#60107c] flex items-center justify-center leading-none border-b border-[#c0c0c0]">构件名称</div>
              </div>
              {compRows.map((r) => (
                <div key={r.n} className={"h-[19px] flex border-b border-[#b8b8b8] leading-none " + (r.n === 2 ? "bg-[#dce6f4]" : "")}>
                  <div className={"w-[26px] flex items-center pl-[8px] pt-[2px] border-r border-[#c0c0c0] " + (r.n === 2 ? "bg-gradient-to-b from-[#fcd890] to-[#f4bc60] text-[#60107c]" : "bg-gradient-to-b from-[#faf9f4] to-[#e8e6da]")}>
                    <span className={mono}>{r.n}</span>
                  </div>
                  <svg width="26" height="18" className="shrink-0">
                    {r.n === 1 ? (
                      <>
                        <path d="M8.500 14V18" stroke="#a0a0a0" />
                        <rect x="2.500" y="3.500" width="12" height="12" fill="#f4f4ec" stroke="#a8a8a8" />
                        <path d="M5 9.500h7" stroke="#000" />
                      </>
                    ) : (
                      <path d={`M8.500 0V${r.n === 5 ? 9 : 18}M8 9.500H25`} stroke="#a0a0a0" />
                    )}
                  </svg>
                  <div className={"flex items-center pt-[2px] " + (r.n === 1 ? "-ml-[7px]" : r.pre ? "ml-[6px]" : "ml-[4px]")}>
                    {r.pre && <span className="mr-px">{r.pre}</span>}
                    <span className={mono}>{r.t}</span>
                  </div>
                </div>
              ))}
            </div>
          </div>
          <div className="mt-[7px]"><PanelHead t="属性编辑框" /></div>
          <div className="mt-[2px] ml-[1px] flex-1 bg-white border border-[#7f9db9] pl-[1px] pt-[1px] overflow-hidden leading-none">
            <div className="w-[179px] border-r border-[#c0c0c0]">
              <div className="h-[20px] flex border-b border-[#c0c0c0]">
                <div className="w-[83px] flex items-center pl-[2px] bg-gradient-to-b from-[#faf9f4] to-[#e8e6da] border-r border-[#c0c0c0]">属性名称</div>
                <div className="w-[65px] flex items-center pl-[2px] bg-gradient-to-b from-[#fce4a8] to-[#f4bc60] text-[#60107c] border-r border-[#c0c0c0]">属性值</div>
                <div className="flex-1 flex items-center pl-[2px] bg-gradient-to-b from-[#faf9f4] to-[#e8e6da]">附加</div>
              </div>
              {props.map((p) => (
                <div key={p.n} className="h-[21px] flex border-b border-[#c0c0c0]">
                  <div className={"w-[83px] flex items-center pl-[20px] pt-px border-r border-[#c0c0c0] overflow-hidden whitespace-nowrap " + (p.g ? "text-[#808080]" : "text-[#0000ff]")}>{p.n}</div>
                  <div className={"w-[65px] flex items-center pl-[2px] border-r border-[#c0c0c0] overflow-hidden whitespace-nowrap " + (p.sel ? "bg-[#dce6f4] " : "") + (p.g ? "text-[#808080] " : "") + (p.pl ?? "")}>
                    {p.m ? <span className={mono + " pt-[2px]"}>{p.v}</span> : <span>{p.v}</span>}
                  </div>
                  <div className="flex-1 flex items-center pl-[2px]">{p.chk && <Check />}</div>
                </div>
              ))}
              <div className="h-[20px] flex border-b border-[#c0c0c0]">
                <div className="w-[83px] flex items-center pl-[3px] border-r border-[#c0c0c0]">
                  <div className="w-[12px] h-[12px] border border-[#b0b0a8] bg-[#f0f0e8] flex items-center justify-center text-[13px] leading-none">+</div>
                  <span className="ml-[5px]">显示样式</span>
                </div>
                <div className="w-[65px] border-r border-[#c0c0c0]" />
                <div className="flex-1" />
              </div>
            </div>
          </div>
        </div>

        {/* right */}
        <div className="ml-[3px] flex-1 min-w-0 flex flex-col">
          <div className="h-[28px] shrink-0 flex">
            <div className="w-[402px] h-[28px] flex items-center leading-none whitespace-nowrap border-r border-[#d4d1be]">
              <div className="ml-[2px]"><Grip /></div>
              <div className="ml-[10px]"><IPointer /></div>
              <span className="ml-[7px]">选择</span>
              <div className="ml-[7px]"><Caret /></div>
              <div className="ml-[7px]"><Sep /></div>
              <div className="ml-[3px] w-[51px] h-[22px] border border-[#3c6ea5] rounded-[3px] bg-[#f6f5ee] flex items-center pl-[4px] gap-[3px]"><ILine /><span>直线</span></div>
              <div className="ml-[3px]"><ICircle /></div>
              <span className="ml-[4px]">点加长度</span>
              <div className="ml-[8px]"><IArc /></div>
              <span className="ml-[4px]">三点画弧</span>
              <div className="ml-[7px]"><Caret /></div>
              <div className="ml-[8px] w-[53px] h-[17px] bg-white flex justify-end pr-px"><Chevron /></div>
              <div className="ml-[7px]"><IRect /></div>
              <span className="ml-[2px]">矩形</span>
            </div>
          </div>
          <div className="flex-1 min-h-0 flex">
            <VBar />
            <div className="flex-1 min-w-0 bg-black overflow-hidden"><Scene /></div>
          </div>
        </div>
      </div>

      {/* tooltip over the canvas */}
      <div className="absolute left-[503px] top-[356px] w-[189px] h-[32px] bg-[#1a1a5e] border border-black text-[#c4c4b4] leading-[13px] pl-[3px] pt-[1px] whitespace-nowrap">
        按鼠标左键指定第一个端点，按右<br />键中止或<span className={mono}>ESC</span>取消
      </div>

      {/* hand-drawn annotations */}
      <svg width="1300" height="826" viewBox="0 0 1300 826" className="absolute inset-0 pointer-events-none">
        <g fill="#ff3c3c">
          <polygon points={arrow(118, 360, 639, 303, 1.2, 5, 10, 14)} />
          <polygon points={arrow(108, 467, 654, 399, 1.2, 5, 10, 14)} />
          <polygon points={arrow(100, 478, 259, 189, 1.2, 5.5, 12, 15)} />
          <polygon points={arrow(306, 193, 1175, 313, 1.2, 4.5, 10, 14)} />
        </g>
        <g fill="none" stroke="#e84848">
          <ellipse cx="283" cy="167" rx="49" ry="44" />
          <ellipse cx="91" cy="359" rx="24" ry="11" />
          <ellipse cx="84" cy="468" rx="26" ry="11" />
          <ellipse cx="75" cy="487" rx="30" ry="16" />
          <ellipse cx="1186" cy="351" rx="26" ry="52" />
        </g>
      </svg>
    </div>
  );
}
